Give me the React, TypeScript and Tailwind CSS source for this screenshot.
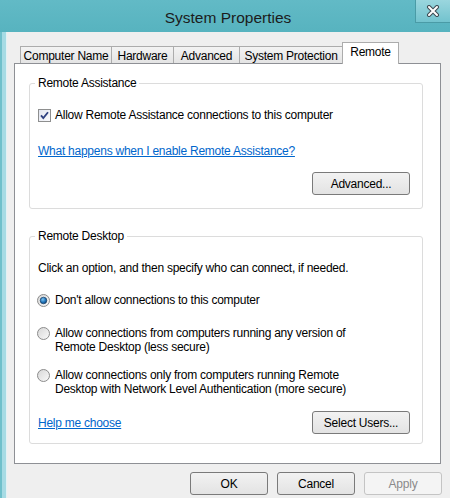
import type { ReactNode } from 'react';

const tabs = [
    { label: 'Computer Name', w: 'w-[92px]' },
    { label: 'Hardware', w: 'w-[63px]' },
    { label: 'Advanced', w: 'w-[67px]' },
    { label: 'System Protection', w: 'w-[104px]' },
];

const Button = ({ children, className = '', disabled }: { children: ReactNode; className?: string; disabled?: boolean }) => (
    <button
        disabled={disabled}
        className={`h-[23px] rounded-[3px] border flex items-center justify-center ${disabled
            ? 'border-[#c4c4c4] bg-[#f4f4f4] text-[#8a8a8a]'
            : 'border-[#7a7a7a] bg-gradient-to-b from-[#f2f2f2] to-[#e3e3e3] text-black'
            } ${className}`}
    >
        {children}
    </button>
);

const Radio = ({ checked }: { checked?: boolean }) => (
    <svg width="13" height="13" viewBox="0 0 13 13" className="shrink-0 mt-[1px]">
        <defs>
            <linearGradient id="rbg" x1="0" y1="0" x2="1" y2="1">
                <stop offset="0" stopColor="#d6d6d6" />
                <stop offset="1" stopColor="#fafafa" />
            </linearGradient>
            <radialGradient id="rdot" cx="0.4" cy="0.35" r="0.7">
                <stop offset="0" stopColor="#7fc4f0" />
                <stop offset="0.6" stopColor="#1d72b8" />
                <stop offset="1" stopColor="#0f3f6e" />
            </radialGradient>
        </defs>
        <circle cx="6.5" cy="6.5" r="6" fill="url(#rbg)" stroke="#8c8c8c" />
        {checked && <circle cx="6.5" cy="6.5" r="3.3" fill="url(#rdot)" stroke="#1a3f66" strokeWidth="0.7" />}
    </svg>
);

const Checkbox = () => (
    <svg width="13" height="13" viewBox="0 0 13 13" className="shrink-0">
        <defs>
            <linearGradient id="cbg" x1="0" y1="0" x2="1" y2="1">
                <stop offset="0" stopColor="#dfe3ee" />
                <stop offset="1" stopColor="#fbfbfd" />
            </linearGradient>
        </defs>
        <rect x="0.5" y="0.5" width="12" height="12" fill="url(#cbg)" stroke="#8e8f8f" />
        <path d="M3 6.3 L5.3 9 L10 3.2" fill="none" stroke="#2c3f80" strokeWidth="1.8" />
    </svg>
);

export default function App() {
    return (
        <div className="w-[450px] h-[498px] flex flex-col bg-[#5db7c3] overflow-hidden font-['Liberation_Sans',Arial,sans-serif] text-[12px] tracking-[-0.25px] text-black">
            {/* title bar */}
            <div className="relative h-[32px] shrink-0 flex items-center justify-center bg-gradient-to-b from-[#62bac6] to-[#57b3bf]">
                <span className="text-[15.5px] tracking-normal text-[#1c1c1c] pl-[6px] pt-[3px]">System Properties</span>
                <div className="absolute top-0 right-0 w-[35px] h-[23px] border-l border-b border-[#4a9ba6] bg-gradient-to-b from-[#9ad6de] to-[#72c3ce] flex items-center justify-center">
                    <svg width="14" height="12" viewBox="0 0 14 12">
                        <path d="M3 2 L11 10 M11 2 L3 10" stroke="#3d4a52" strokeWidth="4" strokeLinecap="round" />
                        <path d="M3 2 L11 10 M11 2 L3 10" stroke="#ffffff" strokeWidth="2" strokeLinecap="round" />
                    </svg>
                </div>
            </div>

            <div className="flex flex-1">
                {/* left frame */}
                <div className="w-[7px] shrink-0 bg-[#a6dbe4] border-l-2 border-[#6fc0cb] border-r border-r-[#e2f2f5]" />

                {/* dialog body */}
                <div className="flex-1 bg-[#efefef] pl-[7px] pt-[10px] flex flex-col">
                    <div className="flex items-end ml-[6px] h-[21px]">
                        {tabs.map((t, i) => (
                            <div
                                key={t.label}
                                className={`${t.w} h-[17px] ${i > 0 ? '-ml-px' : ''} border border-b-0 border-[#acacac] bg-gradient-to-b from-[#f3f3f3] to-[#e4e4e4] flex items-center justify-center pt-[1px]`}
                            >
                                {t.label}
                            </div>
                        ))}
                        <div className="w-[57px] h-[22px] -ml-px -mb-px relative z-10 border border-b-0 border-[#acacac] bg-white flex items-center justify-center pb-[3px]">
                            Remote
                        </div>
                    </div>

                    <div className="w-[427px] h-[401px] border border-[#8e9095] bg-white pl-[14px] pr-[17px] pt-[12px]">
                        <fieldset className="w-[394px] border border-[#dcdcdc] rounded-[3px] px-[8px] pb-[13px] flex flex-col">
                            <legend className="-ml-[3px] px-[3px] leading-[14px]">Remote Assistance</legend>
                            <label className="mt-[18px] flex items-center gap-[4px] leading-[14px]">
                                <Checkbox />
                                <span>Allow Remote Assistance connections to this computer</span>
                            </label>
                            <a href="#" className="mt-[22px] leading-[14px] text-[#0066cc] underline self-start">
                                What happens when I enable Remote Assistance?
                            </a>
                            <div className="mt-[14px] flex justify-end">
                                <Button className="w-[98px] mr-[4px]">Advanced...</Button>
                            </div>
                        </fieldset>

                        <fieldset className="mt-[20px] w-[394px] border border-[#dcdcdc] rounded-[3px] px-[8px] pb-[9px] flex flex-col">
                            <legend className="-ml-[3px] px-[3px] leading-[14px]">Remote Desktop</legend>
                            <p className="mt-[18px] leading-[14px]">Click an option, and then specify who can connect, if needed.</p>
                            <div className="mt-[18px] flex items-start gap-[5px] leading-[14px] -ml-px">
                                <Radio checked />
                                <span>Don't allow connections to this computer</span>
                            </div>
                            <div className="mt-[19px] flex items-start gap-[5px] leading-[14px] -ml-px">
                                <Radio />
                                <span>Allow connections from computers running any version of<br />Remote Desktop (less secure)</span>
                            </div>
                            <div className="mt-[14px] flex items-start gap-[5px] leading-[14px] -ml-px">
                                <Radio />
                                <span>Allow connections only from computers running Remote<br />Desktop with Network Level Authentication (more secure)</span>
                            </div>
                            <div className="mt-[15px] flex items-center justify-between">
                                <a href="#" className="text-[#0066cc] underline leading-[14px] pt-[1px]">Help me choose</a>
                                <Button className="w-[98px] mr-[4px]">Select Users...</Button>
                            </div>
                        </fieldset>
                    </div>

                    <div className="mt-[8px] w-[428px] flex justify-end gap-[9px]">
                        <Button className="w-[78px]">OK</Button>
                        <Button className="w-[78px]">Cancel</Button>
                        <Button className="w-[78px]" disabled>Apply</Button>
                    </div>
                </div>
            </div>
        </div>
    );
}
